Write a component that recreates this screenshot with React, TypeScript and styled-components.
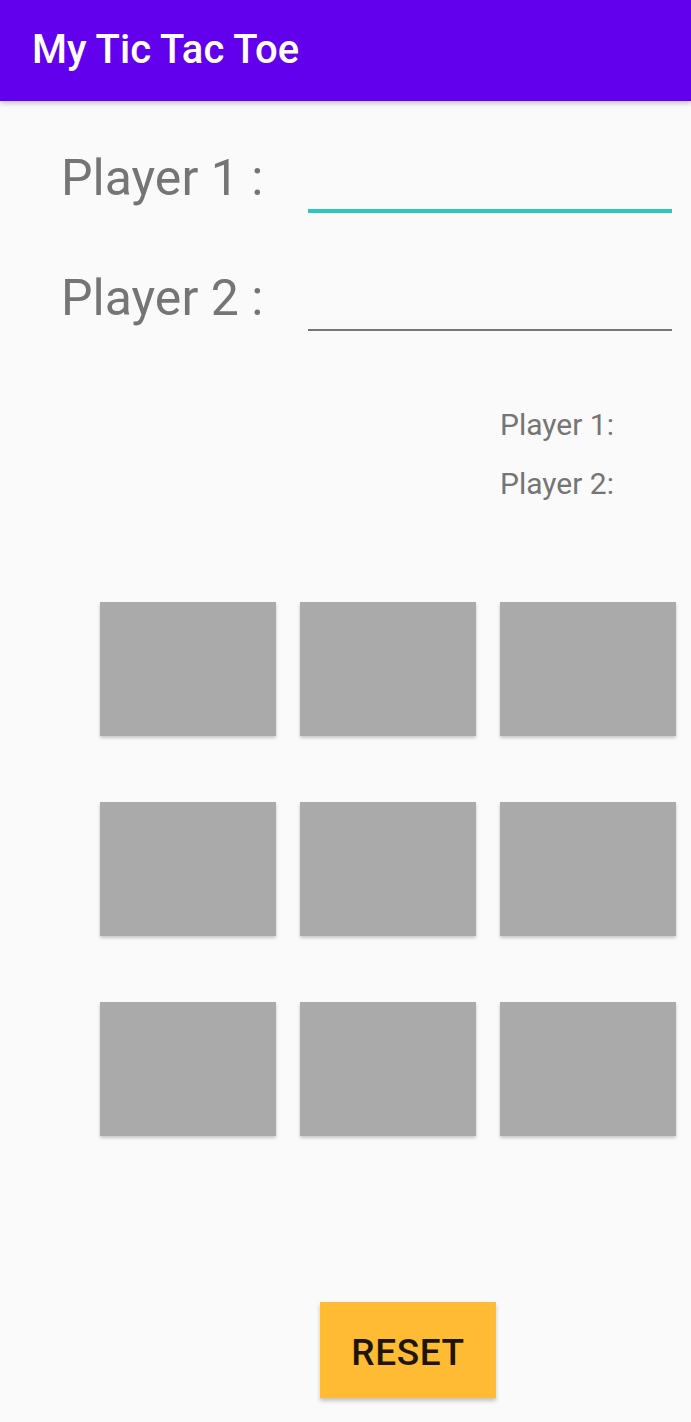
import { useState } from 'react';
import styled, { createGlobalStyle } from 'styled-components';

const GlobalStyle = createGlobalStyle`
  html, body {
    margin: 0;
    padding: 0;
    background: #fafafa;
  }
  body {
    font-family: Roboto, "Noto Sans", "Liberation Sans", sans-serif;
  }
`;

export default () => {
  const [player1, setPlayer1] = useState('');
  const [player2, setPlayer2] = useState('');
  const [focused, setFocused] = useState(1);

  return (
    <Page>
      <GlobalStyle />
      <AppBar>
        <Title>My Tic Tac Toe</Title>
      </AppBar>

      <Form>
        <Row>
          <Label>Player 1 :</Label>
          <NameInput
            $active={focused === 1}
            value={player1}
            onFocus={() => setFocused(1)}
            onChange={(e) => setPlayer1(e.target.value)}
          />
        </Row>
        <Row>
          <Label>Player 2 :</Label>
          <NameInput
            $active={focused === 2}
            value={player2}
            onFocus={() => setFocused(2)}
            onChange={(e) => setPlayer2(e.target.value)}
          />
        </Row>
      </Form>

      <Scores>
        <Score>Player 1:</Score>
        <Score>Player 2:</Score>
      </Scores>

      <Board>
        {Array.from({ length: 9 }).map((_, i) => (
          <Cell key={i} />
        ))}
      </Board>

      <ResetButton
        onClick={() => {
          setPlayer1('');
          setPlayer2('');
        }}
      >
        RESET
      </ResetButton>
    </Page>
  );
};

const Page = styled.div`
  width: 691px;
  height: 1422px;
  display: flex;
  flex-direction: column;
  background: #fafafa;
  overflow: hidden;
`;

const AppBar = styled.header`
  height: 101px;
  box-sizing: border-box;
  padding: 30px 0 0 32px;
  background: #6200ee;
  box-shadow: 0 2px 5px rgba(0, 0, 0, 0.25);
  position: relative;
  z-index: 1;
`;

const Title = styled.h1`
  margin: 0;
  font-size: 40px;
  line-height: 40px;
  font-weight: 500;
  color: #ffffff;
`;

const Form = styled.div`
  display: flex;
  flex-direction: column;
  gap: 60px;
  padding: 52px 0 0 61px;
`;

const Row = styled.div`
  display: flex;
  align-items: flex-start;
  height: 60px;
`;

const Label = styled.span`
  width: 247px;
  font-size: 50px;
  line-height: 50px;
  color: #757575;
`;

const NameInput = styled.input<{ $active: boolean }>`
  width: 364px;
  height: 56px;
  box-sizing: content-box;
  padding: 0;
  border: none;
  border-bottom: ${(p) => (p.$active ? '4px solid #2cc7bd' : '2px solid #767676')};
  background: transparent;
  outline: none;
  font-family: inherit;
  font-size: 36px;
  color: #212121;
`;

const Scores = styled.div`
  display: flex;
  flex-direction: column;
  margin-top: 62px;
  padding-left: 500px;
`;

const Score = styled.span`
  font-size: 30px;
  line-height: 59px;
  color: #757575;
`;

const Board = styled.div`
  display: grid;
  grid-template-columns: repeat(3, 176px);
  grid-auto-rows: 134px;
  column-gap: 24px;
  row-gap: 66px;
  margin: 89px 0 0 100px;
`;

const Cell = styled.div`
  background: #aaaaaa;
  box-shadow: 0 2px 3px rgba(0, 0, 0, 0.2);
`;

const ResetButton = styled.button`
  margin: 166px 0 0 320px;
  width: 176px;
  height: 96px;
  padding: 5px 0 0;
  border: none;
  background: #ffbb33;
  box-shadow: 0 3px 4px rgba(0, 0, 0, 0.22);
  font-family: inherit;
  font-size: 37px;
  font-weight: 500;
  letter-spacing: 0.6px;
  color: #1e1605;
  cursor: pointer;
`;
